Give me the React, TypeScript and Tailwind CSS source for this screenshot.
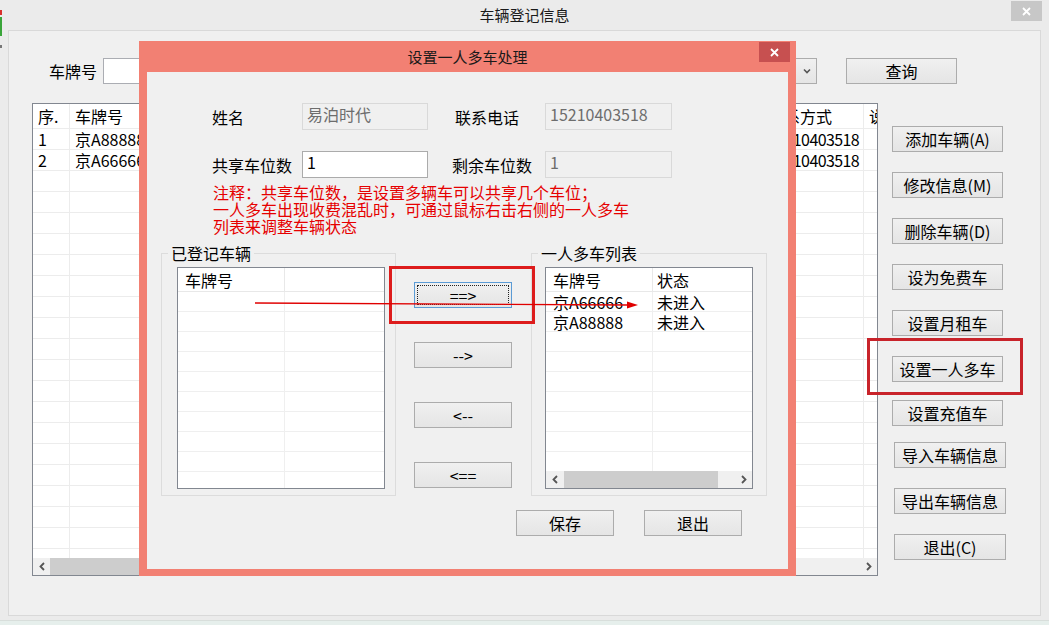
import React from "react";

const XIcon = () => (
  <svg width="9" height="9" viewBox="0 0 9 9" className="block">
    <path d="M1 1 L8 8 M8 1 L1 8" stroke="white" strokeWidth="1.8" />
  </svg>
);

const Arrow = ({ dir }: { dir: "left" | "right" }) => (
  <svg width="6" height="9" viewBox="0 0 6 9" className="block">
    <path
      d={dir === "left" ? "M5 1 L1.5 4.5 L5 8" : "M1 1 L4.5 4.5 L1 8"}
      fill="none"
      stroke="#555"
      strokeWidth="1.8"
    />
  </svg>
);

const ChevronDown = () => (
  <svg width="8" height="6" viewBox="0 0 8 6" className="block">
    <path d="M1 1.5 L4 4.5 L7 1.5" fill="none" stroke="#555" strokeWidth="1.6" />
  </svg>
);

const Btn = ({ label, className = "" }: { label: string; className?: string }) => (
  <div
    className={`flex h-[26px] shrink-0 items-center justify-center border border-[#acacac] bg-linear-to-b from-[#f0f0f0] to-[#e5e5e5] text-[16px] leading-none ${className}`}
  >
    {label}
  </div>
);

const FocusBtn = ({ label }: { label: string }) => (
  <div className="relative flex h-[26px] w-[98px] shrink-0 items-center justify-center border border-[#5b9bd5] bg-linear-to-b from-[#f0f0f0] to-[#e5e5e5] text-[16px] leading-none">
    {label}
    <div className="absolute inset-[2px] border border-dotted border-[#222]" />
  </div>
);

const Field = ({ value, readOnly, className = "" }: { value: string; readOnly?: boolean; className?: string }) => (
  <div
    className={`h-[27px] shrink-0 border pl-[4px] pt-[1px] text-[16px] leading-[18px] ${
      readOnly ? "border-[#d9d9d9] bg-[#f0f0f0] text-[#6d6d6d]" : "border-[#ababab] bg-white text-black"
    } ${className}`}
  >
    {value}
  </div>
);

// ---- main list (mostly hidden behind the dialog)
const MAIN_GRID = "grid grid-cols-[37px_130px_140px_140px_140px_143px_101px_120px]";
const mainHead = ["序.", "车牌号", "", "", "", "", "联系方式", "说明"];
const mainRows = [
  ["1", "京A88888", "", "", "", "", "15210403518", ""],
  ["2", "京A66666", "", "", "", "", "15210403518", ""],
  ...Array.from({ length: 19 }, () => ["", "", "", "", "", "", "", ""]),
];

const MainTable = () => (
  <div className="flex h-[473px] w-[846px] shrink-0 flex-col overflow-hidden border border-[#828790] bg-white">
    <div className={`${MAIN_GRID} h-[25px] shrink-0 border-b border-[#ececec]`}>
      {mainHead.map((h, i) => (
        <div key={i} className="flex items-center overflow-hidden whitespace-nowrap border-r border-[#ececec] pl-[5px] text-[16px]">
          {h}
        </div>
      ))}
    </div>
    <div className="h-[429px] overflow-hidden">
      {mainRows.map((r, i) => (
        <div key={i} className={`${MAIN_GRID} h-[21px] border-b border-[#ececec]`}>
          {r.map((c, j) => (
            <div
              key={j}
              className={`flex items-center overflow-hidden whitespace-nowrap border-r border-[#ececec] pl-[5px] text-[16px] leading-none ${
                j === 6 ? "tracking-[-0.6px]" : ""
              }`}
            >
              {c}
            </div>
          ))}
        </div>
      ))}
    </div>
    <div className="flex h-[17px] shrink-0 bg-[#f0f0f0]">
      <div className="flex w-[17px] items-center justify-center">
        <Arrow dir="left" />
      </div>
      <div className="w-[420px] bg-[#cdcdcd]" />
      <div className="flex-1" />
      <div className="flex w-[17px] items-center justify-center">
        <Arrow dir="right" />
      </div>
    </div>
  </div>
);

// ---- dialog list views
const ListView = ({ head2, rows, scroll }: { head2: string; rows: string[][]; scroll?: boolean }) => {
  const body = [...rows, ...Array.from({ length: 10 - rows.length }, () => ["", ""])];
  return (
    <div className="flex h-[222px] w-[208px] flex-col overflow-hidden border border-[#828790] bg-white text-[16px]">
      <div className="grid h-[24px] shrink-0 grid-cols-[107px_1fr] border-b border-[#e8e8e8]">
        <div className="flex items-center border-r border-[#e8e8e8] pl-[7px]">车牌号</div>
        <div className="flex items-center pl-[4px]">{head2}</div>
      </div>
      <div className="flex-1 overflow-hidden">
        {body.map((r, i) => (
          <div key={i} className="grid h-[20px] grid-cols-[107px_1fr] border-b border-[#efefef]">
            <div className="flex items-center border-r border-[#efefef] pl-[7px] leading-none">{r[0]}</div>
            <div className="flex items-center pl-[4px] leading-none">{r[1]}</div>
          </div>
        ))}
      </div>
      {scroll && (
        <div className="flex h-[17px] shrink-0 bg-[#f0f0f0]">
          <div className="flex w-[17px] items-center justify-center">
            <Arrow dir="left" />
          </div>
          <div className="ml-[1px] w-[154px] bg-[#cdcdcd]" />
          <div className="flex-1" />
          <div className="flex w-[17px] items-center justify-center">
            <Arrow dir="right" />
          </div>
        </div>
      )}
    </div>
  );
};

const Dialog = () => (
  <div className="absolute left-[139px] top-[41px] flex h-[535px] w-[657px] flex-col bg-[#f28073]">
    <div className="relative flex h-[31px] shrink-0 items-center justify-center pt-[2px] text-[15px] text-[#1a1a1a]">
      设置一人多车处理
      <div className="absolute right-[6px] top-[1px] flex h-[20px] w-[31px] items-center justify-center bg-[#c75050]">
        <XIcon />
      </div>
    </div>
    <div className="mx-[8px] mb-[7px] flex flex-1 flex-col bg-[#f0f0f0]">
      <div className="mt-[31px] flex flex-col pl-[65px] text-[16px]">
        <div className="flex h-[27px] items-center">
          <span className="w-[90px]">姓名</span>
          <Field value="易泊时代" readOnly className="w-[126px]" />
          <span className="ml-[27px] w-[90px]">联系电话</span>
          <Field value="15210403518" readOnly className="w-[127px]" />
        </div>
        <div className="mt-[21px] flex h-[27px] items-center">
          <span className="w-[90px]">共享车位数</span>
          <Field value="1" className="w-[126px]" />
          <span className="ml-[24px] w-[93px]">剩余车位数</span>
          <Field value="1" readOnly className="w-[127px]" />
        </div>
        <p className="mt-[6px] pl-[1px] text-[16px] leading-[17px] text-[#e60000]">
          注释：共享车位数，是设置多辆车可以共享几个车位；
          <br />
          一人多车出现收费混乱时，可通过鼠标右击右侧的一人多车
          <br />
          列表来调整车辆状态
        </p>
      </div>

      <div className="mt-[10px] flex pl-[14px]">
        <fieldset className="h-[251px] w-[235px] border border-[#dcdcdc]">
          <legend className="ml-[6px] px-[3px] text-[16px] leading-[16px]">已登记车辆</legend>
          <div className="ml-[15px] mt-[6px]">
            <ListView head2="" rows={[]} />
          </div>
        </fieldset>

        <div className="ml-[18px] flex w-[98px] flex-col gap-[34px] pt-[37px]">
          <FocusBtn label="==>" />
          <Btn label="-->" className="w-[98px]" />
          <Btn label="<--" className="w-[98px]" />
          <Btn label="<==" className="w-[98px]" />
        </div>

        <fieldset className="ml-[19px] h-[251px] w-[236px] border border-[#dcdcdc]">
          <legend className="ml-[6px] px-[3px] text-[16px] leading-[16px]">一人多车列表</legend>
          <div className="ml-[13px] mt-[6px]">
            <ListView
              head2="状态"
              rows={[
                ["京A66666", "未进入"],
                ["京A88888", "未进入"],
              ]}
              scroll
            />
          </div>
        </fieldset>
      </div>

      <div className="mt-[14px] flex gap-[30px] pl-[369px]">
        <Btn label="保存" className="w-[98px]" />
        <Btn label="退出" className="w-[98px]" />
      </div>
    </div>
  </div>
);

export default function App() {
  return (
    <div className="relative flex h-[625px] w-[1049px] flex-col overflow-hidden bg-[#ebebeb] font-['Noto_Sans_CJK_SC',sans-serif] text-black">
      {/* bits of the window behind */}
      <div className="absolute left-0 top-[10px] h-[5px] w-[2px] bg-[#d9302c]" />
      <div className="absolute left-0 top-[17px] h-[19px] w-[2px] bg-[#3aa53a]" />
      <div className="absolute left-0 top-[45px] h-[3px] w-[2px] bg-[#777]" />

      {/* title bar */}
      <div className="relative flex h-[30px] shrink-0 items-center justify-center text-[15px] text-[#1a1a1a]">
        车辆登记信息
        <div className="absolute right-[7px] top-[1px] flex h-[20px] w-[31px] items-center justify-center bg-[#c7c7c7]">
          <XIcon />
        </div>
      </div>

      {/* client area */}
      <div className="mx-[8px] flex h-[586px] shrink-0 flex-col border border-[#d9d9d9] bg-[#f0f0f0]">
        <div className="mt-[27px] flex h-[26px] items-center pl-[40px] pr-[83px]">
          <span className="w-[54px] text-[16px]">车牌号</span>
          <div className="h-[26px] w-[170px] border border-[#abadb3] bg-white" />
          <div className="flex-1" />
          <div className="flex h-[26px] w-[120px] items-center justify-end border border-[#acacac] bg-linear-to-b from-[#f0f0f0] to-[#e5e5e5] pr-[5px]">
            <ChevronDown />
          </div>
          <Btn label="查询" className="ml-[29px] w-[111px]" />
        </div>

        <div className="mt-[19px] flex pl-[23px]">
          <MainTable />
          <div className="ml-[14px] flex flex-col pt-[23px]">
            <Btn label="添加车辆(A)" className="w-[111px]" />
            <Btn label="修改信息(M)" className="mt-[20px] w-[111px]" />
            <Btn label="删除车辆(D)" className="mt-[20px] w-[111px]" />
            <Btn label="设为免费车" className="mt-[20px] w-[111px]" />
            <Btn label="设置月租车" className="mt-[20px] w-[111px]" />
            <Btn label="设置一人多车" className="mt-[20px] w-[111px]" />
            <Btn label="设置充值车" className="mt-[18px] w-[111px]" />
            <Btn label="导入车辆信息" className="ml-[2px] mt-[16px] w-[112px]" />
            <Btn label="导出车辆信息" className="ml-[2px] mt-[20px] w-[112px]" />
            <Btn label="退出(C)" className="ml-[2px] mt-[20px] w-[112px]" />
          </div>
        </div>
      </div>
      <div className="mt-[4px] flex-1 border-t border-[#d8dedb] bg-[#e6efec]" />

      <Dialog />

      {/* red annotations */}
      <div className="absolute left-[389px] top-[266px] h-[58px] w-[146px] border-[3px] border-[#dd1c1c]" />
      <div className="absolute left-[867px] top-[338px] h-[57px] w-[156px] border-[3px] border-[#c8232a]" />
      <svg className="absolute left-[250px] top-[296px]" width="392" height="16">
        <line x1="5" y1="7" x2="378" y2="9" stroke="#e00000" strokeWidth="1.3" />
        <polygon points="377,5.5 388,9 377,12.5" fill="#e00000" />
      </svg>
    </div>
  );
}
